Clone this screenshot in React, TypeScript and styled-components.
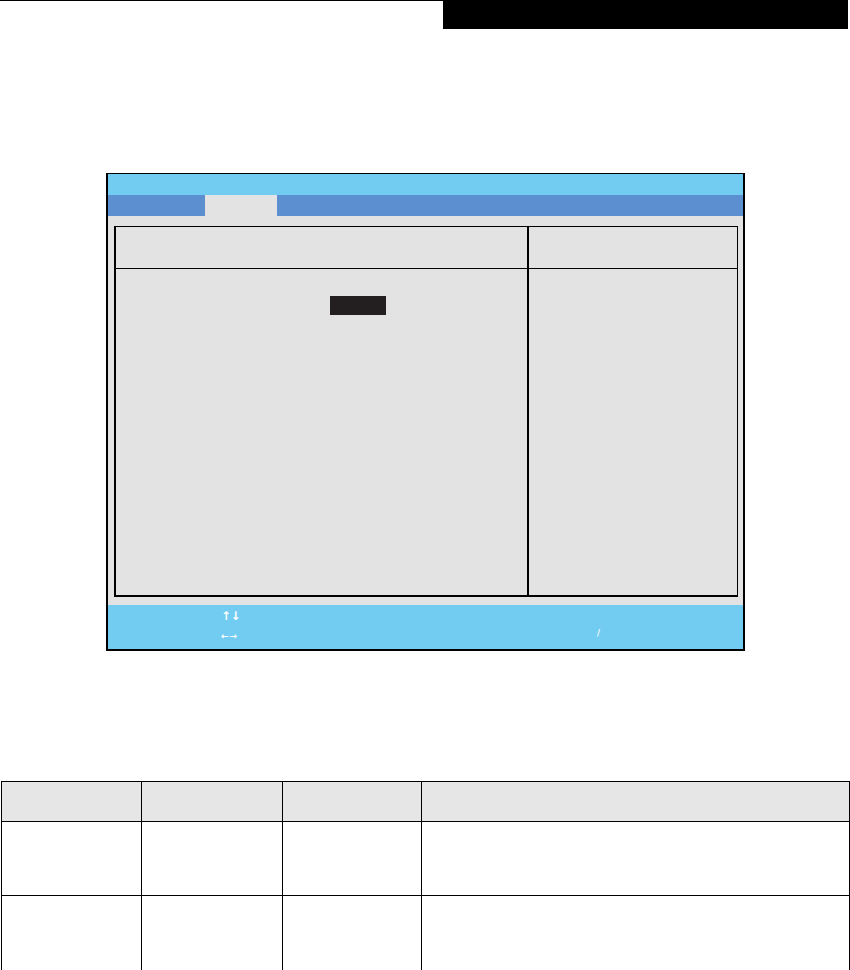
import styled, { createGlobalStyle } from "styled-components";

const GlobalStyle = createGlobalStyle`
  html, body {
    margin: 0;
    padding: 0;
    background: #ffffff;
    font-family: "Liberation Sans", Arial, sans-serif;
  }
`;

const Page = styled.div`
  width: 850px;
  height: 970px;
  display: flex;
  flex-direction: column;
  background: #ffffff;
  overflow: hidden;
`;

const Masthead = styled.header`
  display: flex;
  align-items: flex-start;
  height: 29px;
  padding-right: 2px;
`;

const Rule = styled.div`
  width: 443px;
  height: 1px;
  background: #000000;
`;

const Banner = styled.div`
  flex: 1;
  height: 29px;
  background: #000000;
`;

const ScreenWrap = styled.section`
  margin-top: 144px;
  padding-left: 106px;
`;

const Screen = styled.div`
  width: 635px;
  border: 2px solid #000000;
  border-top-width: 1px;
  background: #e3e3e3;
  display: flex;
  flex-direction: column;
`;

const TitleBar = styled.div`
  height: 21px;
  background: #72cbf1;
`;

const MenuBar = styled.nav`
  height: 21px;
  background: #5b8fd0;
  display: flex;
  padding-left: 97px;
`;

const Tab = styled.div<{ $active?: boolean }>`
  width: 72px;
  height: 21px;
  background: ${(p) => (p.$active ? "#e3e3e3" : "transparent")};
`;

const Body = styled.div`
  padding: 10px 5px 8px 6px;
`;

const Frame = styled.div`
  height: 368px;
  border: 2px solid #000000;
  border-top-width: 1px;
  border-right-width: 1px;
  display: grid;
  grid-template-columns: 411px 1fr;
  grid-template-rows: 42px 1fr;
`;

const Cell = styled.div<{ $head?: boolean; $side?: boolean }>`
  border-bottom: ${(p) => (p.$head ? "1px solid #000000" : "none")};
  border-left: ${(p) => (p.$side ? "2px solid #000000" : "none")};
`;

const ItemRow = styled.div`
  display: flex;
  padding: 27px 0 0 214px;
`;

const Selected = styled.div`
  width: 56px;
  height: 19px;
  background: #231f20;
`;

const FooterWrap = styled.div`
  position: relative;
`;

const Footer = styled.div`
  height: 42px;
  background: #72cbf1;
  display: grid;
  grid-template-columns: 113px 1fr;
  grid-template-rows: 20px 20px;
  padding-top: 2px;
  color: #ffffff;
  font-family: "DejaVu Sans", sans-serif;
  font-weight: bold;
`;

const KeyHint = styled.span<{ $size: number; $gap: number }>`
  grid-column: 2;
  font-size: ${(p) => p.$size}px;
  line-height: 18px;
  letter-spacing: ${(p) => p.$gap}px;
`;

const Slash = styled.span`
  position: absolute;
  left: 489px;
  top: 24px;
  color: #ffffff;
  font-family: "DejaVu Sans", sans-serif;
  font-weight: bold;
  font-size: 8px;
  line-height: 10px;
`;

const Table = styled.div`
  margin-top: 130px;
  margin-left: 1px;
  width: 849px;
  border-top: 1px solid #000000;
  border-left: 1px solid #000000;
  display: grid;
  grid-template-columns: 140px 141px 139px 428px;
  grid-template-rows: 40px 74px 75px;
`;

const TableCell = styled.div<{ $head?: boolean }>`
  border-right: 1px solid #000000;
  border-bottom: 1px solid #000000;
  background: ${(p) => (p.$head ? "#e6e6e6" : "#ffffff")};
`;

export default function App() {
  const rows = [true, false, false];
  return (
    <Page>
      <GlobalStyle />
      <Masthead>
        <Rule />
        <Banner />
      </Masthead>
      <ScreenWrap>
        <Screen>
          <TitleBar />
          <MenuBar>
            <Tab $active />
          </MenuBar>
          <Body>
            <Frame>
              <Cell $head />
              <Cell $head $side />
              <Cell>
                <ItemRow>
                  <Selected />
                </ItemRow>
              </Cell>
              <Cell $side />
            </Frame>
          </Body>
          <FooterWrap>
            <Footer>
              <KeyHint $size={12} $gap={-0.5}>↑↓</KeyHint>
              <KeyHint $size={9} $gap={1}>←→</KeyHint>
            </Footer>
            <Slash>/</Slash>
          </FooterWrap>
        </Screen>
      </ScreenWrap>
      <Table>
        {rows.map((head, r) =>
          [0, 1, 2, 3].map((c) => <TableCell key={`${r}-${c}`} $head={head} />)
        )}
      </Table>
    </Page>
  );
}
